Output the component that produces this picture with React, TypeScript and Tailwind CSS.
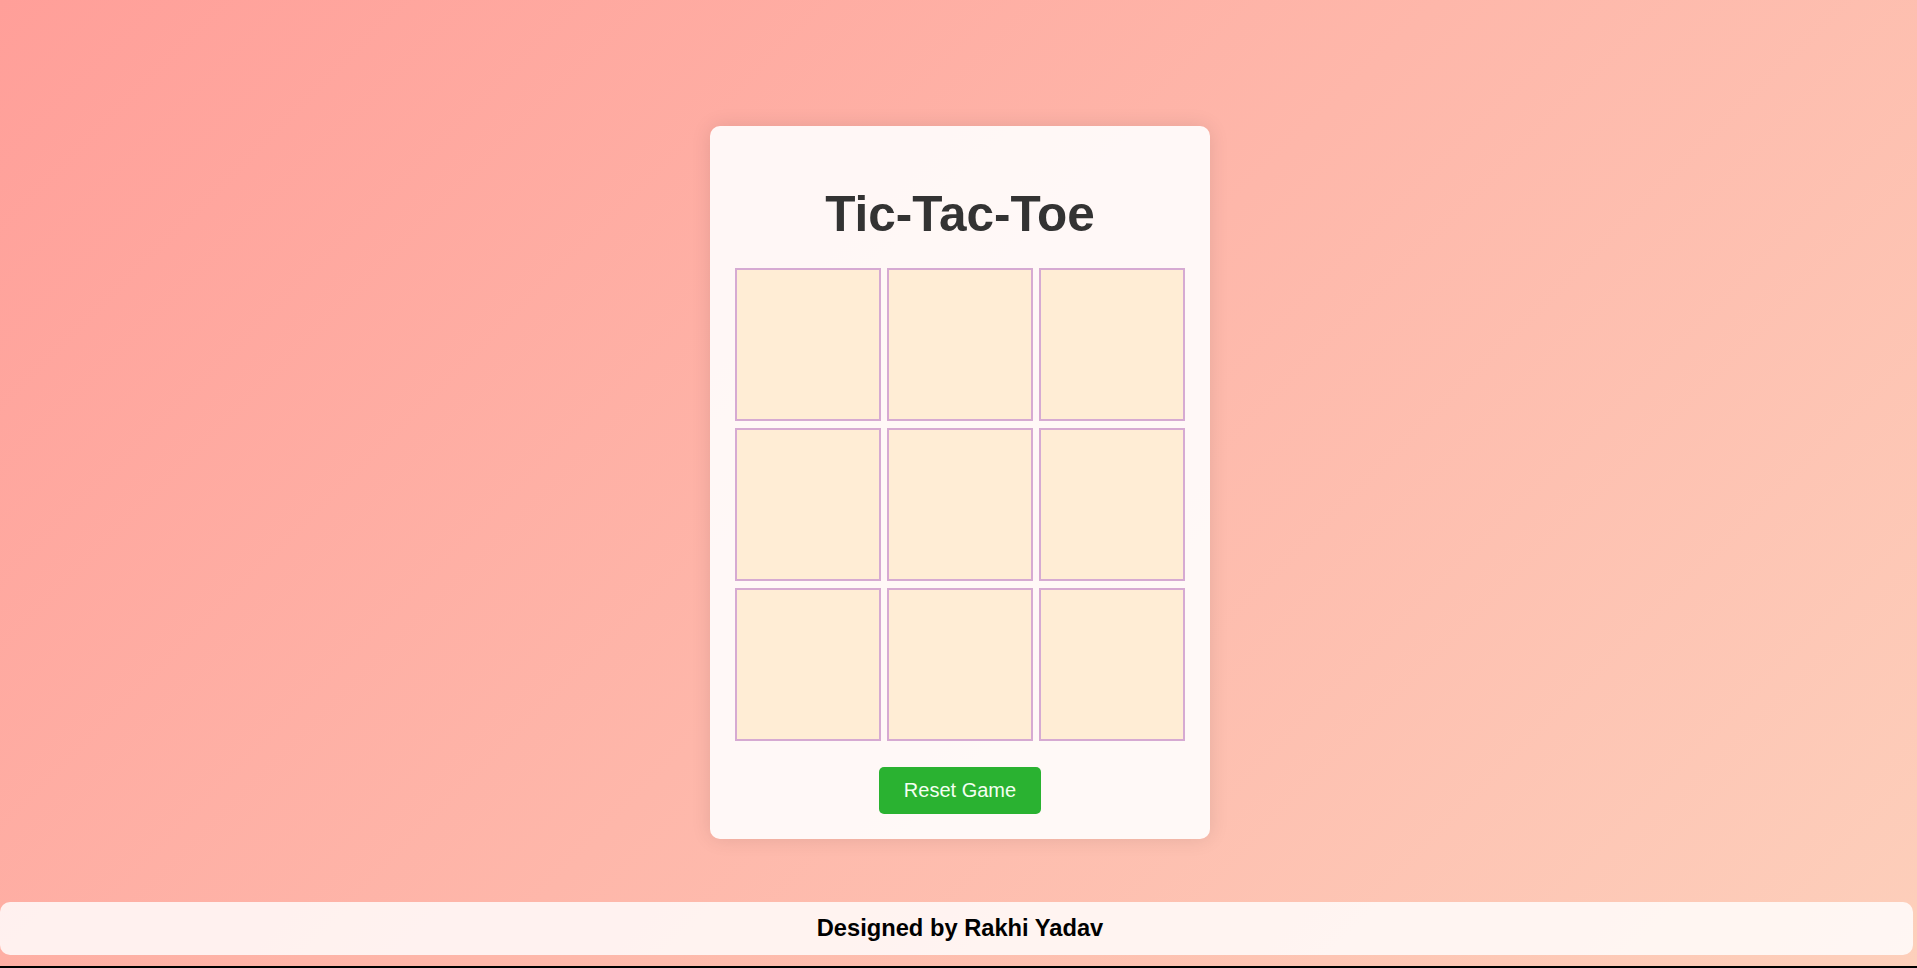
import React from "react";

export default function App() {
  const cells = Array.from({ length: 9 });
  return (
    <div
      className="relative w-full h-[968px] overflow-hidden flex flex-col bg-[linear-gradient(135deg,#ff9f99,#fdcfbb)] border-b-2 border-black"
      style={{ fontFamily: '"Liberation Sans", Arial, sans-serif' }}
    >
      <div className="ml-[710px] mt-[126px] w-[500px] bg-[rgba(255,255,255,0.9)] rounded-[10px] shadow-[0_0_20px_rgba(0,0,0,0.1)] px-[25px] pt-[61px] pb-[25px]">
        <h1 className="text-[49.5px] leading-[54px] font-bold text-[#333] text-center mb-[27px]">
          Tic-Tac-Toe
        </h1>
        <div className="grid grid-cols-[146px_146px_146px] gap-x-[6px] gap-y-[7px]">
          {cells.map((_, i) => (
            <div
              key={i}
              className="h-[153px] bg-[#ffedd5] border-2 border-[#d6aad2] cursor-pointer"
            />
          ))}
        </div>
        <div className="flex justify-center mt-[26px]">
          <button className="w-[162px] h-[47px] rounded-[5px] bg-[#2ab231] text-[#f4fff2] text-[20px] leading-[23px]">
            Reset Game
          </button>
        </div>
      </div>
      <footer className="mt-[63px] mr-[4px] h-[53px] rounded-[10px] bg-[rgba(255,255,255,0.82)] flex items-center justify-center pl-[7px]">
        <span className="text-[23.7px] font-bold text-black">Designed by Rakhi Yadav</span>
      </footer>
    </div>
  );
}
